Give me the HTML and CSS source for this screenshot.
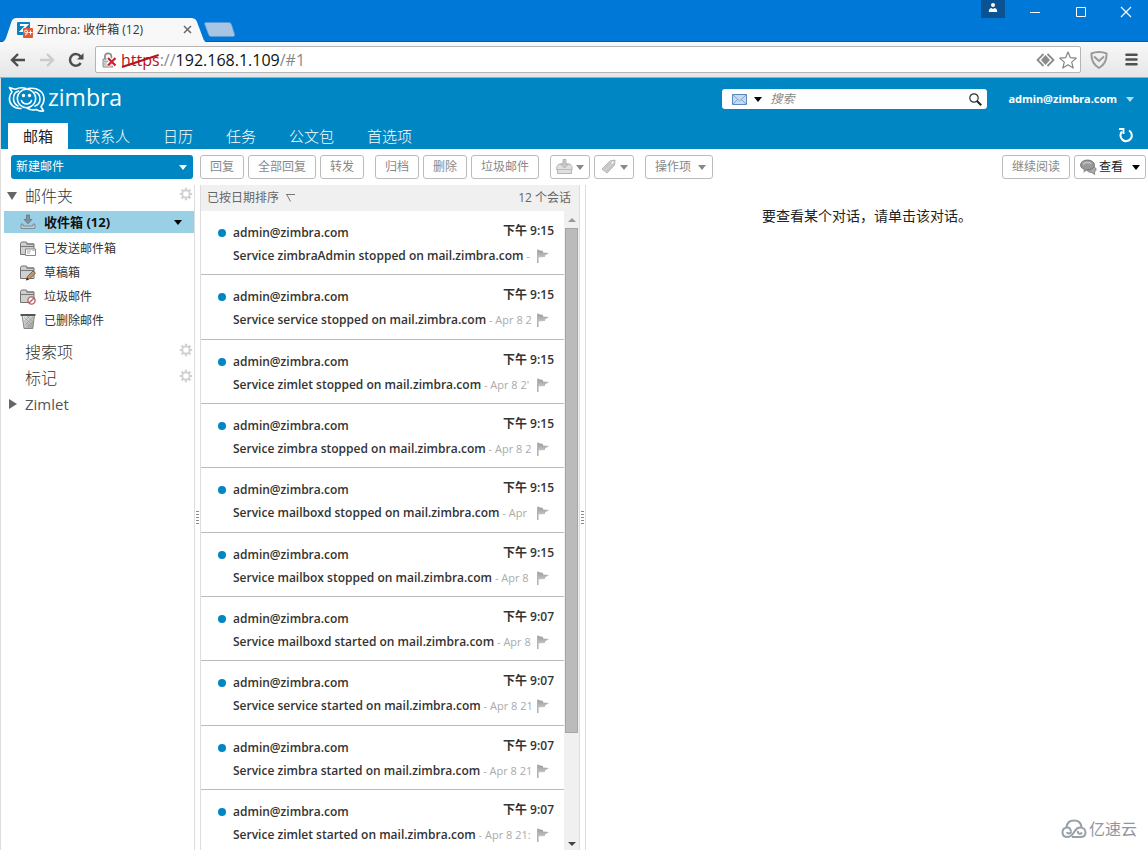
FILE: index.html
```html
<!DOCTYPE html>
<html lang="zh-CN">
<head>
<meta charset="utf-8">
<meta name="viewport" content="width=device-width, initial-scale=1">
<title>Zimbra: 收件箱 (12)</title>
<link rel="stylesheet" href="styles.css">
</head>
<body>
<svg class="defs" aria-hidden="true">
  <defs>
    <linearGradient id="gm" x1="0" y1="0" x2="1" y2="1"><stop offset="0" stop-color="#f2f2f2"/><stop offset="1" stop-color="#9a9a9a"/></linearGradient>
    <linearGradient id="gf" x1="0" y1="0" x2="0" y2="1"><stop offset="0" stop-color="#9c9c9c"/><stop offset="1" stop-color="#c4c4c4"/></linearGradient>
    <symbol id="flag" viewBox="0 0 14 14"><path d="M1.800 .5v13.500" stroke="#b0b0b0" stroke-width="1.500"/><path d="M2 1l5 1v1.500l6 .5-4 2.500v1.500L2 8.500z" fill="url(#gf)"/></symbol>
    <symbol id="gear" viewBox="0 0 14 14"><circle cx="7" cy="7" r="3.700" fill="none" stroke="#cfcfcf" stroke-width="1.800"/><path d="M7 .8v2M7 11.200v2M.8 7h2M11.200 7h2M2.600 2.600L4 4M10 10l1.400 1.400M2.600 11.400L4 10M10 4l1.400-1.400" stroke="#cfcfcf" stroke-width="2.200"/></symbol>
    <symbol id="folder" viewBox="0 0 16 16"><path d="M.5 13.500V2.500L1.500 1h5l1 2h6.500v10.500z" fill="#d0d0d0" stroke="#737373"/><path d="M1 5.500h13M6 3h8" stroke="#777"/></symbol>
  </defs>
</svg>
<div class="window">
  <header class="titlebar">
    <div class="tab">
      <svg class="tab-shape" viewBox="0 0 208 25" preserveAspectRatio="none"><path d="M0 25C4 24 5 22 6 20L11 5C12 1 14 0 17 0H191C194 0 196 1 197 4L203 20C204 23 205 24 208 25z" fill="#f8f8f8"/></svg>
      <div class="tab-body">
        <svg class="favicon" width="16" height="16" viewBox="0 0 16 16"><rect width="13" height="13" rx="1" fill="#0d82c0"/><path d="M3 3h7L4 9h3" fill="none" stroke="#fff" stroke-width="1.800"/><rect x="6" y="6" width="10" height="10" rx="1" fill="#e25a33"/><circle cx="9" cy="9.500" r="1.400" fill="none" stroke="#fff"/><path d="M10.500 9.500c0 2-.5 3-2.500 3.500M11.500 10.500h4M13.500 8.500v4" stroke="#fff" fill="none"/></svg>
        <span class="tab-title">Zimbra: 收件箱 (12)</span>
        <button class="plain" aria-label="关闭标签页"><svg width="9" height="9" viewBox="0 0 9 9"><path d="M1 1l7 7M8 1L1 8" stroke="#6a6a6a" stroke-width="1.500"/></svg></button>
      </div>
    </div>
    <button class="plain newtab" aria-label="新标签页"><svg width="31" height="15" viewBox="0 0 31 15"><path d="M2 .5h22c2 0 3 .5 3.500 2l3 9.500c.5 1.500 0 2.500-1.500 2.500H8c-2 0-3-.5-3.500-2L.8 2.500C.3 1 1 .5 2 .5z" fill="#a8c5e3" stroke="#5c9ad4" stroke-width=".8"/></svg></button>
    <div class="winctl">
      <button class="user" aria-label="用户"><svg width="10" height="10" viewBox="0 0 10 10"><circle cx="5" cy="2" r="2" fill="#fff"/><path d="M.8 9c0-3 1-3.500 2.500-4l1.700 1 1.700-1C8.200 5.500 9.200 6 9.200 9z" fill="#fff"/></svg></button>
      <button class="win" aria-label="最小化"><svg width="12" height="12" viewBox="0 0 12 12"><path d="M1 6.500h10" stroke="#fff"/></svg></button>
      <button class="win" aria-label="最大化"><svg width="12" height="12" viewBox="0 0 12 12"><path d="M1.500 1.500h9v9h-9z" stroke="#fff" fill="none"/></svg></button>
      <button class="win" aria-label="关闭"><svg width="12" height="12" viewBox="0 0 12 12"><path d="M1 1l10 10M11 1L1 11" stroke="#fff" stroke-width="1.200"/></svg></button>
    </div>
  </header>

  <div class="addressbar">
    <button class="plain" aria-label="后退"><svg width="16" height="14" viewBox="0 0 16 14"><path d="M8 1L2 7l6 6M2 7h13" fill="none" stroke="#4d4d4d" stroke-width="2.400"/></svg></button>
    <button class="plain" aria-label="前进" disabled><svg width="16" height="14" viewBox="0 0 16 14"><path d="M8 1l6 6-6 6M14 7H1" fill="none" stroke="#cbcbcb" stroke-width="2.400"/></svg></button>
    <button class="plain" aria-label="重新加载"><svg width="16" height="16" viewBox="0 0 16 16"><path d="M12.700 11A5.800 5.800 0 1 1 12.500 4.500" fill="none" stroke="#4d4d4d" stroke-width="2.500"/><path d="M15.500 1v6.500H9z" fill="#4d4d4d"/></svg></button>
    <div class="omnibox">
      <svg width="15" height="16" viewBox="0 0 15 16"><path d="M3 7V4.500a3.200 3.200 0 0 1 6.400 0V7" fill="none" stroke="#8c8c8c" stroke-width="1.800"/><path d="M1 7h10v8H1z" fill="#d6d6d6" stroke="#8c8c8c"/><path d="M2 9.500h8M2 12h8" stroke="#aaa"/><path d="M5.500 5.500l8 8M13.500 5.500l-8 8" stroke="#fff" stroke-width="4"/><path d="M6 6l7.500 7.500M13.500 6L6 13.500" stroke="#cc1f2b" stroke-width="2.200"/></svg>
      <div class="url" role="textbox" aria-label="地址" tabindex="0"><span class="scheme">https<svg class="strike" viewBox="0 0 40 14" preserveAspectRatio="none"><path d="M1 13L39 1" stroke="#b31420" stroke-width="2"/></svg></span><span class="dim">://</span>192.168.1.109<span class="dim">/#1</span></div>
      <svg width="19" height="14" viewBox="0 0 19 14"><path d="M7.500 1L1.500 7l6 6M11.500 1l6 6-6 6" fill="none" stroke="#8b8b8b" stroke-width="1.800"/><path d="M9.500 2L14 7l-4.500 5L5 7z" fill="#8b8b8b"/></svg>
      <button class="plain" aria-label="添加书签"><svg width="18" height="18" viewBox="0 0 18 18"><path d="M9 1l2.300 5.600 6 .5-4.600 4 1.500 6L9 13.800 3.800 17.100l1.500-6-4.600-4 6-.5z" fill="#fff" stroke="#858585" stroke-width="1.200" stroke-linejoin="round"/></svg></button>
    </div>
    <button class="plain" aria-label="扩展程序"><svg width="18" height="18" viewBox="0 0 18 18"><path d="M9 1c3 0 5.500.5 7.500 1.500C17 10 14 14 9 17 4 14 1 10 1.500 2.500 3.500 1.500 6 1 9 1z" fill="none" stroke="#9a9a9a" stroke-width="2"/><path d="M4 5.500l5 4.500 5-4.500" fill="none" stroke="#9a9a9a" stroke-width="2"/></svg></button>
    <button class="plain menu" aria-label="菜单"><svg width="13" height="13" viewBox="0 0 13 13"><path d="M1.500 1.800h10M1.500 6.500h10M1.500 11.200h10" stroke="#505050" stroke-width="2.600" stroke-linecap="round"/></svg></button>
  </div>

  <div class="app">
    <header class="banner">
      <div class="brandrow">
        <a class="brand" href="#" aria-label="zimbra">
          <svg width="37" height="26" viewBox="0 0 37 26" fill="none" stroke="#fff" stroke-width="1.600" stroke-linecap="round" stroke-linejoin="round"><path d="M13 22.500C6 23 1 18 1.500 12 1.600 9 3 7 4 6L1.500 1.500C4 2.500 6 3 7.500 3.300 11 1.500 15 1.500 18 2.500"/><path d="M10.500 5C7 6 5.500 9 5.500 12.500c0 3 1.500 6 4.500 7.500"/><circle cx="18.500" cy="12.500" r="9.200"/><path d="M20 2.500C30 1 36 6 36 13c0 3-1 5.500-3 7.500l2.500 4.500c-3 .5-5 0-7.500-1.500-3 1-6 .5-9-1.500"/><path d="M27 6c3.500 1 5 4 5 7s-2 6-5 7"/><path d="M13.500 14.500c1.500 4.500 8.500 4.500 10 0"/><circle cx="15.500" cy="9.500" r=".9" fill="#fff"/><circle cx="21.500" cy="9.500" r=".9" fill="#fff"/></svg>
          <span>zimbra</span>
        </a>
        <form class="search" role="search">
          <button type="button" class="plain scope" aria-label="搜索范围"><svg width="15" height="11" viewBox="0 0 15 11"><path d="M.5.500h14v10H.5z" fill="#c3daf2" stroke="#5e87ba"/><path d="M1 1l6.500 6L14 1M1 10l4.500-4.500M14 10L9.500 5.500" fill="none" stroke="#7096c2" stroke-width=".8"/></svg><i class="caret black"></i></button>
          <input type="text" placeholder="搜索" aria-label="搜索">
          <button type="button" class="plain" aria-label="开始搜索"><svg width="13" height="13" viewBox="0 0 13 13"><circle cx="5" cy="5" r="4.200" fill="#fff" stroke="#333" stroke-width="1.200"/><path d="M8 8l4.200 4.300" stroke="#222" stroke-width="2"/></svg></button>
        </form>
        <button class="plain account">admin@zimbra.com<i class="caret pale"></i></button>
      </div>
      <nav class="apptabs">
        <a class="active" href="#">邮箱</a><a href="#">联系人</a><a href="#">日历</a><a href="#">任务</a><a href="#">公文包</a><a href="#">首选项</a>
        <button class="plain refresh" aria-label="刷新"><svg width="16" height="16" viewBox="0 0 16 16"><path d="M11 3.500A5.700 5.700 0 1 1 4 4.500" fill="none" stroke="#fff" stroke-width="2"/><path d="M1 2h4.500v5" fill="none" stroke="#fff" stroke-width="1.800"/></svg></button>
      </nav>
    </header>

    <div class="toolbar">
      <button class="compose">新建邮件<i class="caret"></i></button>
      <div class="group">
        <button class="btn">回复</button><button class="btn">全部回复</button><button class="btn">转发</button>
      </div>
      <div class="group">
        <button class="btn">归档</button><button class="btn">删除</button><button class="btn">垃圾邮件</button>
      </div>
      <div class="group">
        <button class="btn icon" aria-label="移动"><svg width="17" height="16" viewBox="0 0 17 16"><path d="M1.500 14.500V11H.8V7.500L3 5h11l2 2.500V11h-.5v3.500z" fill="#e0e0e0" stroke="#b4b4b4"/><path d="M1 10.500h15" stroke="#bbb"/><path d="M7 .5h3V5h2.500L8.500 9 4.500 5H7z" fill="#c8c8c8" stroke="#aaa" stroke-width=".8"/></svg><i class="caret grey"></i></button>
        <button class="btn icon" aria-label="标记"><svg width="17" height="16" viewBox="0 0 17 16"><path d="M2 10L10 2l5-1-.5 5L7 14z" fill="#d0d0d0" stroke="#b2b2b2"/><path d="M4.500 10l7-7M6.500 12l7-7" stroke="#bbb"/><circle cx="12.500" cy="3.500" r="1" fill="#fff"/></svg><i class="caret grey"></i></button>
      </div>
      <div class="group">
        <button class="btn drop">操作项<i class="caret grey"></i></button>
      </div>
      <div class="group end">
        <button class="btn">继续阅读</button>
        <button class="btn view"><svg width="17" height="16" viewBox="0 0 17 16"><path d="M9 8c4-1 7 0 7 2.500 0 1.200-.7 2-1.700 2.500l.5 2.500-3-2c-3 0-5-1.500-5-3z" fill="#aaa" stroke="#666" stroke-width=".7"/><ellipse cx="7.500" cy="6" rx="7" ry="5" fill="#999" stroke="#666" stroke-width=".8"/><path d="M4 10l-.5 4 4-3.500z" fill="#8b8b8b"/><path d="M3 5.500c1-2 6-3 8-1" stroke="#c5c5c5" fill="none" stroke-width="1.500"/></svg>查看<i class="caret black"></i></button>
      </div>
    </div>

    <main class="panes">
      <aside class="sidebar">
        <h2 class="top"><i class="tri down"></i><span>邮件夹</span><svg class="gear"><use href="#gear"/></svg></h2>
        <ul>
          <li class="selected"><svg width="16" height="16" viewBox="0 0 16 16"><path d="M1 10v4.500h14V10h-2v2H3v-2z" fill="#c3ced3" stroke="#6f7f86" stroke-width=".8"/><path d="M6.500 1h3v4.500H12L8 9.800 4 5.500h2.500z" fill="#839299" stroke="#5e6d73" stroke-width=".7"/></svg><a href="#">收件箱 (12)</a><i class="caret black"></i></li>
          <li><svg width="16" height="16" viewBox="0 0 16 16"><use href="#folder"/><path d="M5.500 8h10v6.500h-10z" fill="#fff" stroke="#888"/><path d="M7 10h4M7 12h3M12.500 9.500h2" stroke="#aaa"/></svg><a href="#">已发送邮件箱</a></li>
          <li><svg width="16" height="16" viewBox="0 0 16 16"><use href="#folder"/><path d="M6.500 15L7.500 11.500 13 6l2.500 2L9.500 14z" fill="#c49a6b" stroke="#5d5247" stroke-width=".8"/><path d="M6 15.500l1-3 2 1.700z" fill="#333"/></svg><a href="#">草稿箱</a></li>
          <li><svg width="16" height="16" viewBox="0 0 16 16"><use href="#folder"/><circle cx="11.500" cy="11.500" r="3.600" fill="#fff" stroke="#b25f66" stroke-width="1.400"/><path d="M9 14l5-5" stroke="#b25f66" stroke-width="1.400"/></svg><a href="#">垃圾邮件</a></li>
          <li><svg width="16" height="16" viewBox="0 0 16 16"><path d="M2 2h12.500L12.800 15.500H4z" fill="url(#gm)" stroke="#707070" stroke-width=".8"/><path d="M4 4l8 8M7 3l6 6M4.500 8l6 6M13 4l-8 8M9.500 3L4 8.500M12.500 9L7 14.500" stroke="#888" stroke-width=".5"/><path d="M.5 2h15" stroke="#555" stroke-width="2"/></svg><a href="#">已删除邮件</a></li>
        </ul>
        <h2><i class="tri"></i><span>搜索项</span><svg class="gear"><use href="#gear"/></svg></h2>
        <h2><i class="tri"></i><span>标记</span><svg class="gear"><use href="#gear"/></svg></h2>
        <h2><i class="tri right"></i><span>Zimlet</span></h2>
      </aside>
      <div class="splitter"><i></i></div>
      <section class="list">
        <div class="listhead"><span>已按日期排序</span><svg width="9" height="8" viewBox="0 0 9 8"><path d="M0 .5h9M1 1l3.500 6.500" stroke="#777" fill="none"/></svg><span class="count">12 个会话</span></div>
        <div class="listbody">
          <ul class="rows">
            <li><b class="from">admin@zimbra.com</b><time>下午 9:15</time><p><b>Service zimbraAdmin stopped on mail.zimbra.com</b> -</p><svg class="flag"><use href="#flag"/></svg></li>
            <li><b class="from">admin@zimbra.com</b><time>下午 9:15</time><p><b>Service service stopped on mail.zimbra.com</b> - Apr 8 2</p><svg class="flag"><use href="#flag"/></svg></li>
            <li><b class="from">admin@zimbra.com</b><time>下午 9:15</time><p><b>Service zimlet stopped on mail.zimbra.com</b> - Apr 8 2'</p><svg class="flag"><use href="#flag"/></svg></li>
            <li><b class="from">admin@zimbra.com</b><time>下午 9:15</time><p><b>Service zimbra stopped on mail.zimbra.com</b> - Apr 8 2</p><svg class="flag"><use href="#flag"/></svg></li>
            <li><b class="from">admin@zimbra.com</b><time>下午 9:15</time><p><b>Service mailboxd stopped on mail.zimbra.com</b> - Apr</p><svg class="flag"><use href="#flag"/></svg></li>
            <li><b class="from">admin@zimbra.com</b><time>下午 9:15</time><p><b>Service mailbox stopped on mail.zimbra.com</b> - Apr 8</p><svg class="flag"><use href="#flag"/></svg></li>
            <li><b class="from">admin@zimbra.com</b><time>下午 9:07</time><p><b>Service mailboxd started on mail.zimbra.com</b> - Apr 8</p><svg class="flag"><use href="#flag"/></svg></li>
            <li><b class="from">admin@zimbra.com</b><time>下午 9:07</time><p><b>Service service started on mail.zimbra.com</b> - Apr 8 21</p><svg class="flag"><use href="#flag"/></svg></li>
            <li><b class="from">admin@zimbra.com</b><time>下午 9:07</time><p><b>Service zimbra started on mail.zimbra.com</b> - Apr 8 21</p><svg class="flag"><use href="#flag"/></svg></li>
            <li><b class="from">admin@zimbra.com</b><time>下午 9:07</time><p><b>Service zimlet started on mail.zimbra.com</b> - Apr 8 21:</p><svg class="flag"><use href="#flag"/></svg></li>
          </ul>
          <div class="scrollbar"><i class="arrow up"></i><div class="track"><div class="thumb"></div></div><i class="arrow"></i></div>
        </div>
      </section>
      <div class="splitter right"><i></i></div>
      <section class="reading"><p>要查看某个对话，请单击该对话。</p></section>
    </main>
  </div>
  <div class="watermark"><svg width="26" height="20" viewBox="0 0 26 20" fill="none" stroke="#98a0a7" stroke-width="2"><path d="M5.500 8C6 4 9 1.500 13 1.500S20 4 20.500 8"/><path d="M10 12.500C9.500 10 8.500 8.500 6.500 8.500 3.500 8.500 1.500 10.500 1.500 13.500S4 18 7 18c3.500 0 5-3 6.500-5.500 1.500-2.500 3-4 5.500-4 3 0 5.500 2 5.500 5S22 18 19 18H11"/><path d="M10 12.500c.5 2-3.500 3-4 .5M17 12c-1 2.500 2.500 4 4 1.500"/></svg><span>亿速云</span></div>
</div>
</body>
</html>
```

FILE: styles.css
```css
* { box-sizing: border-box; }
body, h2, p, ul { margin: 0; padding: 0; font: inherit; }
body { font: 12px/16px "Open Sans", "Noto Sans CJK SC", sans-serif; color: #333; background: #fff; }
ul { list-style: none; }
a { color: inherit; text-decoration: none; }
button, input { font: inherit; color: inherit; }
svg { flex: none; }
.defs { position: absolute; width: 0; height: 0; }
.plain { display: flex; align-items: center; border: 0; padding: 0; background: none; }
.window { display: flex; flex-direction: column; height: 100vh; overflow: hidden; }

.caret { flex: none; border: 4px solid transparent; border-top: 5px solid #fff; border-bottom: 0; }
.caret.black { border-top-color: #000; }
.caret.grey { border-top-color: #888; }
.caret.pale { border-top-color: #b3dcf0; }

.titlebar { display: flex; flex: none; align-items: flex-end; height: 42px; background: #0078d7; border-bottom: 1px solid #0a5cab; }
.tab { display: grid; width: 208px; height: 24px; margin-bottom: -1px; }
.tab > * { grid-area: 1 / 1; }
.tab-shape { width: 100%; height: 25px; }
.tab-body { display: flex; align-items: center; padding: 0 16px 2px 17px; gap: 4px; color: #333; }
.tab-title { flex: 1; }
.newtab { align-self: flex-end; margin: 0 0 4px -4px; }
.winctl { display: flex; align-self: flex-start; margin-left: auto; }
.user, .win { display: flex; justify-content: center; border: 0; padding: 0; background: none; }
.user { width: 24px; height: 18px; padding-top: 3px; background: #0a5292; margin-right: 7px; }
.win { width: 46px; height: 26px; padding-top: 6px; }
.win:last-child { width: 44px; }

.addressbar { display: flex; flex: none; align-items: center; height: 36px; padding: 0 10px; gap: 13px; background: linear-gradient(#f8f8f8, #e6e6e6); border-bottom: 1px solid #aaa; }
.omnibox { display: flex; flex: 1; align-items: center; height: 27px; margin-left: -2px; margin-right: -4px; padding: 0 3px 0 6px; gap: 4px; background: #fff; border: 1px solid #b5b5b5; border-radius: 2px; }
.menu { margin-left: 4px; }
.url { flex: 1; font-size: 16px; line-height: 24px; color: #111; }
.scheme { position: relative; color: #b31420; }
.strike { position: absolute; left: 0; top: 5px; width: 100%; height: 14px; }
.dim { color: #888; }

.app { display: flex; flex: 1; flex-direction: column; min-height: 0; border-left: 1px solid #ddd; }
.banner { flex: none; background: #0087c3; color: #fff; }
.brandrow { display: flex; align-items: center; height: 42px; padding: 0 14px 0 7px; }
.brand { display: flex; align-items: center; gap: 3px; font: 23px/28px "Open Sans", sans-serif; }
.brand span { margin-top: -4px; }
.search { display: flex; align-items: center; width: 265px; height: 20px; margin-left: auto; padding: 0 5px 0 10px; gap: 8px; background: #fff; border-radius: 3px; }
.scope { gap: 7px; }
.search input { flex: 1; min-width: 0; border: 0; padding: 0; outline: 0; background: none; color: #333; }
.search input::placeholder { color: #888; font-style: italic; opacity: 1; }
.account { margin-left: 21px; gap: 9px; font-family: "Noto Sans", sans-serif; font-size: 11px; font-weight: 700; }
.apptabs { display: flex; align-items: flex-end; gap: 1px; height: 29px; padding: 0 14px 0 7px; font-size: 15px; font-weight: 300; }
.apptabs a { height: 26px; padding: 0 16px; line-height: 26px; }
.apptabs .active { width: 60px; padding: 0; text-align: center; background: #fff; color: #222; font-weight: 400; }
.refresh { margin: 0 0 6px auto; }

.toolbar { display: flex; flex: none; align-items: center; height: 36px; padding: 0 2px 0 10px; }
.compose { display: flex; align-items: center; justify-content: space-between; width: 182px; height: 24px; border: 0; border-radius: 3px; padding: 0 6px 0 5px; background: #0087c3; color: #fff; }
.group { display: flex; gap: 4px; margin-left: 11px; }
.compose + .group { margin-left: 7px; }
.group.end { margin-left: auto; }
.btn { display: flex; align-items: center; height: 24px; border: 1px solid #bbb; border-radius: 3px; padding: 0 9px; gap: 7px; background: #fff; color: #888; }
.btn.icon { padding: 0 5px; gap: 3px; }
.btn.drop { padding-right: 6px; }
.btn.view { padding: 0 5px; gap: 2px; color: #222; }
.btn.view .caret { margin-left: 7px; }

.panes { display: flex; flex: 1; min-height: 0; }
.sidebar { flex: none; width: 194px; border-right: 1px solid #ddd; }
.sidebar h2 { display: flex; align-items: center; height: 26px; padding: 0 1px 0 6px; gap: 8px; font-size: 16px; font-weight: 300; line-height: 24px; }
.sidebar h2.top { padding-bottom: 4px; }
.sidebar h2 span { flex: 1; }
.sidebar h2:last-child { font-size: 15px; font-weight: 400; color: #555; }
.gear { width: 14px; height: 14px; margin-bottom: 4px; }
.tri { width: 10px; border: 5px solid transparent; }
.tri.down { border-top: 8px solid #666; border-bottom: 0; }
.tri.right { border-left: 8px solid #666; border-right: 0; margin-left: 2px; width: 8px; }
.sidebar ul { padding-bottom: 6px; }
.sidebar li { display: flex; align-items: center; height: 24px; margin-left: 3px; padding: 0 12px 0 16px; gap: 8px; }
.sidebar .selected { height: 22px; margin-bottom: 4px; background: #9ad0e6; font-size: 13px; font-weight: 700; color: #111; }
.selected a { flex: 1; }

.splitter { display: flex; flex: none; align-items: center; justify-content: center; width: 5px; }
.splitter i { width: 3px; height: 14px; background: repeating-linear-gradient(#888 0 1px, transparent 1px 3px); }
.splitter.right { border-right: 1px solid #ddd; width: 6px; }

.list { display: flex; flex: none; flex-direction: column; width: 380px; border: solid #ddd; border-width: 0 1px; }
.listhead { display: flex; flex: none; align-items: center; height: 26px; padding: 0 8px 0 6px; gap: 7px; background: #f0f0f0; color: #666; }
.count { margin-left: auto; }
.listbody { display: flex; flex: 1; min-height: 0; }
.rows { flex: 1; min-width: 0; overflow: hidden; }
.rows li { display: grid; grid-template-columns: 1fr auto; grid-template-rows: 24px 16px; align-items: start; height: 64px; padding: 12px 10px 0 32px; border-bottom: 1px solid #bbb; }
.rows li:nth-child(3n+2) { height: 65px; }
.rows b, time { font-size: 12px; font-weight: 600; color: #333; }
.from { display: flex; align-items: center; margin-left: -15px; gap: 7px; padding-top: 2px; }
.from::before { content: ""; width: 8px; height: 8px; border-radius: 50%; background: #0087c3; }
.rows p { grid-row: 2; grid-column: 1 / -1; padding-top: 1px; font-size: 11px; white-space: nowrap; color: #aaa; }
.flag { grid-area: 2 / 2; justify-self: end; width: 14px; height: 14px; margin: 2px 4px 0 0; }
.scrollbar { display: flex; flex: none; flex-direction: column; align-items: center; width: 15px; padding: 7px 1px 4px; background: #f0f0f0; }
.arrow { border: 4px solid transparent; border-top: 4px solid #444; border-bottom: 0; }
.arrow.up { border-bottom: 4px solid #999; border-top: 0; }
.track { flex: 1; width: 13px; margin: 6px 0; }
.thumb { height: 83%; background: #bbb; border: 1px solid #a5a5a5; }
.reading { flex: 1; padding-top: 23px; text-align: center; color: #222; font-size: 14px; }

.watermark { position: absolute; right: 11px; bottom: 10px; display: flex; align-items: center; gap: 2px; font-size: 16px; line-height: 22px; color: #8f979e; }
```
